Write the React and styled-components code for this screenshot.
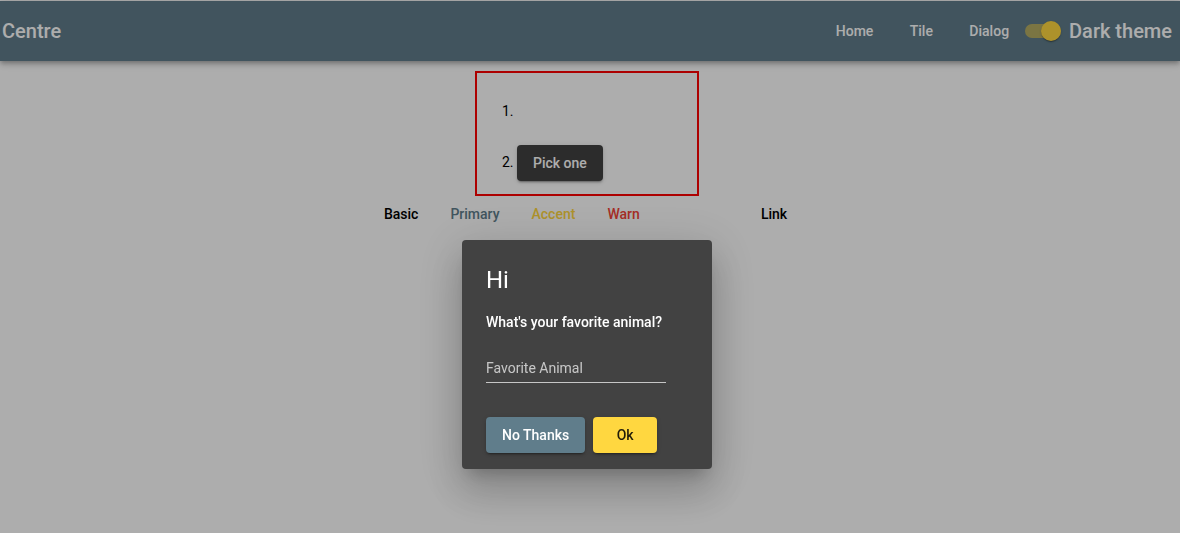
import React from "react";
import styled, { createGlobalStyle } from "styled-components";

const GlobalStyle = createGlobalStyle`
  body {
    margin: 0;
    background: #ffffff;
    font-family: Roboto, "Helvetica Neue", sans-serif;
  }
`;

const Toolbar = styled.header`
  margin-top: 1px;
  height: 60px;
  background: #607d8b;
  color: #ffffff;
  display: flex;
  align-items: center;
  padding: 0 8px 0 2px;
  box-shadow: 0 2px 4px -1px rgba(0, 0, 0, 0.2), 0 4px 5px 0 rgba(0, 0, 0, 0.14),
    0 1px 10px 0 rgba(0, 0, 0, 0.12);
  position: relative;
  z-index: 1;
`;

const Brand = styled.span`
  font-size: 20px;
  font-weight: 500;
  flex: 1;
`;

const NavButton = styled.button`
  background: transparent;
  border: none;
  color: #ffffff;
  font-family: inherit;
  font-size: 14px;
  font-weight: 500;
  min-width: 64px;
  height: 36px;
  padding: 0 16px;
  cursor: pointer;
`;

const Toggle = styled.label`
  display: flex;
  align-items: center;
  gap: 8px;
  font-size: 20px;
  font-weight: 500;
`;

const Track = styled.span`
  position: relative;
  width: 36px;
  height: 14px;
  border-radius: 7px;
  background: rgba(255, 215, 64, 0.54);
`;

const Thumb = styled.span`
  position: absolute;
  right: 0;
  top: -3px;
  width: 20px;
  height: 20px;
  border-radius: 50%;
  background: #ffd740;
  box-shadow: 0 2px 1px -1px rgba(0, 0, 0, 0.2), 0 1px 1px 0 rgba(0, 0, 0, 0.14),
    0 1px 3px 0 rgba(0, 0, 0, 0.12);
`;

const Main = styled.main`
  display: flex;
  flex-direction: column;
  align-items: center;
  padding: 10px 6px 0 0;
`;

const Box = styled.div`
  width: 220px;
  border: 2px solid #ff0000;
  padding: 20px 0 14px;
`;

const List = styled.ol`
  margin: 0;
  padding-left: 40px;
  font-size: 14px;
  color: #000;
  display: flex;
  flex-direction: column;
  gap: 15px;
`;

const Item = styled.li`
  height: 36px;
  line-height: 36px;
`;

const RaisedButton = styled.button`
  background: ${(p) => p.bg || "#424242"};
  color: ${(p) => p.fg || "#ffffff"};
  border: none;
  border-radius: 4px;
  font-family: inherit;
  font-size: 14px;
  font-weight: 500;
  min-width: 64px;
  height: 36px;
  padding: 0 16px;
  vertical-align: middle;
  box-shadow: 0 3px 1px -2px rgba(0, 0, 0, 0.2), 0 2px 2px 0 rgba(0, 0, 0, 0.14),
    0 1px 5px 0 rgba(0, 0, 0, 0.12);
`;

const ButtonRow = styled.div`
  display: flex;
`;

const FlatButton = styled.button`
  background: transparent;
  border: none;
  color: ${(p) => p.color || "#000"};
  font-family: inherit;
  font-size: 14px;
  font-weight: 500;
  min-width: 64px;
  height: 36px;
  padding: 0 16px;
`;

const Backdrop = styled.div`
  position: fixed;
  inset: 0;
  z-index: 10;
  background: rgba(0, 0, 0, 0.32);
  display: flex;
  flex-direction: column;
  align-items: center;
  padding: 240px 6px 0 0;
  box-sizing: border-box;
`;

const Dialog = styled.div`
  width: 250px;
  box-sizing: border-box;
  background: #424242;
  color: #ffffff;
  border-radius: 4px;
  padding: 24px 24px 16px;
  box-shadow: 0 11px 15px -7px rgba(0, 0, 0, 0.2), 0 24px 38px 3px rgba(0, 0, 0, 0.14),
    0 9px 46px 8px rgba(0, 0, 0, 0.12);
`;

const Title = styled.h2`
  margin: 0 0 16px;
  font-size: 24px;
  font-weight: 400;
  line-height: 32px;
`;

const Question = styled.p`
  margin: 0;
  font-size: 14px;
  font-weight: 500;
  line-height: 20px;
`;

const Field = styled.div`
  width: 180px;
  padding: 26px 0 4px;
  border-bottom: 1px solid rgba(255, 255, 255, 0.7);
  font-size: 14px;
  line-height: 20px;
  color: rgba(255, 255, 255, 0.7);
`;

const Actions = styled.div`
  display: flex;
  gap: 8px;
  margin-top: 34px;
`;

export default function App() {
  return (
    <>
      <GlobalStyle />
      <Toolbar>
        <Brand>Centre</Brand>
        <NavButton>Home</NavButton>
        <NavButton>Tile</NavButton>
        <NavButton>Dialog</NavButton>
        <Toggle>
          <Track>
            <Thumb />
          </Track>
          Dark theme
        </Toggle>
      </Toolbar>
      <Main>
        <Box>
          <List>
            <Item />
            <Item>
              <RaisedButton>Pick one</RaisedButton>
            </Item>
          </List>
        </Box>
        <ButtonRow>
          <FlatButton>Basic</FlatButton>
          <FlatButton color="#607d8b">Primary</FlatButton>
          <FlatButton color="#ffd740">Accent</FlatButton>
          <FlatButton color="#f44336">Warn</FlatButton>
          <FlatButton color="rgba(255,255,255,0.3)" disabled>
            Disabled
          </FlatButton>
          <FlatButton>Link</FlatButton>
        </ButtonRow>
      </Main>
      <Backdrop>
        <Dialog>
          <Title>Hi</Title>
          <Question>What's your favorite animal?</Question>
          <Field>Favorite Animal</Field>
          <Actions>
            <RaisedButton bg="#607d8b">No Thanks</RaisedButton>
            <RaisedButton bg="#ffd740" fg="rgba(0,0,0,0.87)">
              Ok
            </RaisedButton>
          </Actions>
        </Dialog>
      </Backdrop>
    </>
  );
}
